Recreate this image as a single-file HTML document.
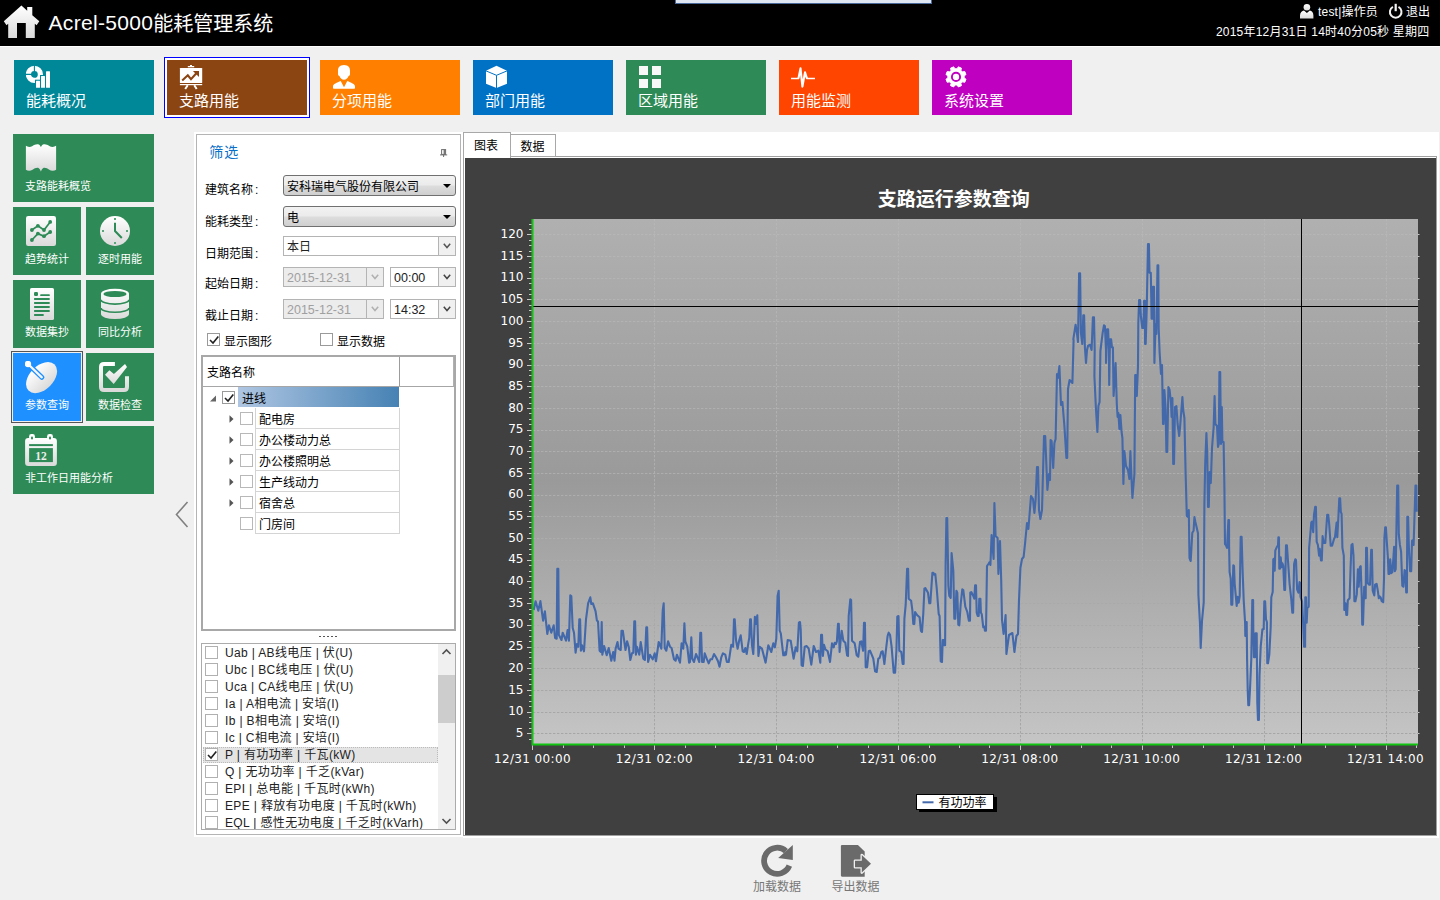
<!DOCTYPE html><html lang="zh"><head><meta charset="utf-8"><title>Acrel-5000能耗管理系统</title><style>
*{box-sizing:border-box;margin:0;padding:0}
html,body{width:1440px;height:900px;overflow:hidden;background:#f0f0f0}
body{position:relative;font-family:"Liberation Sans","Noto Sans CJK SC",sans-serif;font-size:12px;color:#000;line-height:1}
.a{position:absolute}
.t{position:absolute;white-space:nowrap}
#hdr{left:0;top:0;width:1440px;height:46px;background:#000}
#ttl{left:48.5px;top:9px;font-size:20px;line-height:30px;color:#fff}
#ttl .l{font-size:21px;letter-spacing:.32px;position:relative;top:-.6px}
.ht{color:#fff;font-size:12px;line-height:14px}
.mt{width:140px;height:55px;top:60px}
.mt .t{left:12px;top:31.5px;font-size:15px;line-height:18px;color:#fff}
.mt svg{position:absolute;left:12px;top:5px}
.lt{background:#2e8b57;width:68px;height:68px}
.lt.w{width:141px}
.lt .t{left:12px;top:45px;font-size:11px;line-height:14px;color:#fff}
.lt svg{position:absolute;left:12px;top:8px}
.lb{font-size:12px;line-height:14px}
.cmb{height:21px;border:1px solid #707070;border-radius:3px;background:linear-gradient(#f2f2f2 0,#ebebeb 48%,#dddddd 52%,#cfcfcf 100%);font-size:12px;line-height:20px;padding:1px 0 0 3px}
.cmb i{position:absolute;right:4px;top:8px;width:0;height:0;border:4px solid transparent;border-top:4.5px solid #000;border-bottom:0}
.fc{height:20px;border:1px solid #b4b4b4;background:#fff;font-size:12px;line-height:18px;padding:1px 0 0 3px;color:#222}
.fc.dis{background:#ececec;color:#a0a0a0}
.fc b{position:absolute;right:0;top:0;width:17px;height:18px;border-left:1px solid #b4b4b4;background:#f0f0f0}
.fc.dis b{background:#ececec}
.ck{width:13px;height:13px;border:1px solid #9a9a9a;background:#fff}
.tr{left:255px;width:145px;height:21px;border-left:1px solid #d4d4d4;border-right:1px solid #d4d4d4;border-bottom:1px solid #d4d4d4}
.li{left:225px;font-size:12px;line-height:14px;color:#222;letter-spacing:.35px}
</style></head><body>
<div class="a" id="hdr"></div><div class="a" style="left:0;top:46px;width:1440px;height:1px;background:#fff"></div>
<div class="a" style="left:675px;top:-1px;width:257px;height:4.5px;background:#dfe8f2;border:1px solid #48689a;border-top:0"></div>
<svg class="a" style="left:0;top:0" width="44" height="46" viewBox="0 0 44 46"><defs><linearGradient id="gh" x1="0" y1="0" x2="0" y2="1"><stop offset="0" stop-color="#ffffff"/><stop offset="1" stop-color="#dadada"/></linearGradient></defs><path d="M21.4 5.6 L27.2 10.7 V7 H32.3 V15.2 L39.3 21.3 L36.6 25.2 L34.8 23.8 V38.1 H25.8 V23 H17 V38.1 H8.2 V23.8 L6.5 25.2 L3.8 21.3 Z" fill="url(#gh)"/></svg>
<div class="t" id="ttl"><span class="l">Acrel-5000</span>能耗管理系统</div>
<svg class="a" style="left:1299px;top:3px" width="16" height="17" viewBox="0 0 16 17"><defs><linearGradient id="gu" x1="0" y1="0" x2="0" y2="1"><stop offset="0" stop-color="#ffffff"/><stop offset="1" stop-color="#dadada"/></linearGradient></defs><circle cx="7.9" cy="4.2" r="3.3" fill="url(#gu)"/><path d="M1 15.6 V12.5 C1 9.5 3 8 5 7.6 L7.9 10 L10.8 7.6 C12.8 8 14.4 9.5 14.4 12.5 V15.6 Z" fill="url(#gu)"/></svg>
<div class="t ht" style="left:1318px;top:5px;letter-spacing:.2px">test|操作员</div>
<svg class="a" style="left:1388px;top:3px" width="16" height="17" viewBox="0 0 16 17"><path d="M4.9 3.9 A5.8 5.8 0 1 0 10.5 3.9" fill="none" stroke="#f2f2f2" stroke-width="2"/><path d="M7.7 0.8 V8.2" stroke="#f2f2f2" stroke-width="2.2"/></svg>
<div class="t ht" style="left:1406px;top:5px">退出</div>
<div class="t ht" style="right:10.5px;top:25px;letter-spacing:.22px">2015年12月31日 14时40分05秒 星期四</div>
<div class="a mt" style="left:14px;background:#008899"><svg width="26" height="26" viewBox="0 0 26 26"><circle cx="8.4" cy="9.4" r="6" fill="none" stroke="#fff" stroke-width="5.2"/><path d="M8.4 0 V9.4 H0" fill="none" stroke="#008899" stroke-width="1.1"/><g fill="#008899"><rect x="9" y="14.7" width="6" height="9"/><rect x="14" y="10" width="6" height="14"/><rect x="19" y="5.2" width="6" height="19"/></g><g fill="#fff"><rect x="10" y="15.7" width="4" height="7.1" rx=".5"/><rect x="15" y="11" width="4" height="11.8" rx=".5"/><rect x="20" y="6.2" width="4" height="16.6" rx=".5"/></g></svg><div class="t">能耗概况</div></div>
<div class="a" style="left:164px;top:57px;width:146px;height:61px;border:1px solid #0000ff;background:#fff"></div>
<div class="a mt" style="left:167px;background:#8b4513"><svg width="26" height="26" viewBox="0 0 26 26"><rect x="11" y="0" width="2" height="1.4" fill="#fff"/><rect x="8.8" y="1" width="6.4" height="1.3" fill="#fff"/><rect x="0.9" y="3" width="22.3" height="15" rx=".6" fill="#fff"/><rect x="0.9" y="19" width="22.3" height="1.2" fill="#fff"/><path d="M8.7 20.2 L6.2 24 M15.3 20.2 L17.7 24" stroke="#fff" stroke-width="2"/><path d="M3.2 15.5 L8.8 10.3 L12 14.2 L17.6 8" fill="none" stroke="#8b4513" stroke-width="2.1"/><path d="M13.9 6 H20 V11.9 Z" fill="#8b4513"/></svg><div class="t">支路用能</div></div>
<div class="a mt" style="left:320px;background:#ff8000"><svg width="26" height="26" viewBox="0 0 26 26"><path d="M12 0 C16.5 0 18 2.8 18 5.5 V9 C18 10.4 17 10.8 16.4 11.2 C15.6 13.4 14 14.8 12 14.8 C10 14.8 8.4 13.4 7.6 11.2 C7 10.8 6 10.4 6 9 V5.5 C6 2.8 7.5 0 12 0 Z" fill="#fff"/><path d="M8.7 16 L12 22.3 L15.3 16 C19 17.5 23 19 23 21.5 V23 Q23 23.8 22.2 23.8 H1.8 Q1 23.8 1 23 V21.5 C1 19 5 17.5 8.7 16 Z" fill="#fff"/></svg><div class="t">分项用能</div></div>
<div class="a mt" style="left:473px;background:#0072c6"><svg width="26" height="26" viewBox="0 0 26 26"><path d="M11.5 0.8 L22 5.7 V18.8 L11.5 23 L1 18.8 V5.7 Z" fill="#fff"/><path d="M1 5.9 L11.5 10.3 L22 5.9 M11.5 10.3 V23" fill="none" stroke="#0072c6" stroke-width="1"/></svg><div class="t">部门用能</div></div>
<div class="a mt" style="left:626px;background:#2e8b57"><svg width="26" height="26" viewBox="0 0 26 26"><g fill="#f8f8f8"><rect x="1" y="1" width="9" height="9"/><rect x="14" y="1" width="9" height="9"/><rect x="1" y="14" width="9" height="9"/><rect x="14" y="14" width="9" height="9"/></g></svg><div class="t">区域用能</div></div>
<div class="a mt" style="left:779px;background:#ff4500"><svg width="26" height="26" viewBox="0 0 26 26"><path d="M0 13.5 H8 M15.4 13.5 H24" fill="none" stroke="#fff" stroke-width="1.3"/><path d="M7.4 13.6 L9.5 3.4 L11.4 21.6 L14 7.4 L16 13.6" fill="none" stroke="#fff" stroke-width="2.1" stroke-linejoin="round"/></svg><div class="t">用能监测</div></div>
<div class="a mt" style="left:932px;background:#c000c0"><svg width="26" height="26" viewBox="0 0 26 26"><path d="M20.12 13.06 L22.03 14.23 L20.74 17.35 L18.56 16.82 L16.92 18.46 L17.45 20.64 L14.33 21.93 L13.16 20.02 L10.84 20.02 L9.67 21.93 L6.55 20.64 L7.08 18.46 L5.44 16.82 L3.26 17.35 L1.97 14.23 L3.88 13.06 L3.88 10.74 L1.97 9.57 L3.26 6.45 L5.44 6.98 L7.08 5.34 L6.55 3.16 L9.67 1.87 L10.84 3.78 L13.16 3.78 L14.33 1.87 L17.45 3.16 L16.92 5.34 L18.56 6.98 L20.74 6.45 L22.03 9.57 L20.12 10.74 Z" fill="#fff" stroke="#fff" stroke-width="1" stroke-linejoin="round"/><circle cx="12" cy="11.9" r="4.1" fill="none" stroke="#c000c0" stroke-width="1.9"/></svg><div class="t">系统设置</div></div>
<div class="a lt w" style="left:13px;top:134px"><svg width="34" height="34" viewBox="0 0 34 34"><defs><linearGradient id="g1" x1="0" y1="0" x2="0" y2="1"><stop offset="0" stop-color="#ffffff"/><stop offset="1" stop-color="#dadada"/></linearGradient></defs><path d="M0.9 3.8 C2.5 5.2 5.5 5.2 7.5 4 C9.5 2.6 12 1.6 13.8 2.6 C15 3.3 15.5 4.5 15.9 5.1 C16.3 4.5 16.8 3.3 18 2.6 C19.8 1.6 22.3 2.6 24.3 4 C26.3 5.2 29.3 5.2 31.1 3.8 V27.7 C29.3 29 26.3 29 24.3 27.8 C22.3 26.4 19.8 25.2 18 26.2 C16.8 26.9 16.3 28.5 15.9 29.6 C15.5 28.5 15 26.9 13.8 26.2 C12 25.2 9.5 26.4 7.5 27.8 C5.5 29 2.5 29 0.9 27.7 Z" fill="url(#g1)"/></svg><div class="t">支路能耗概览</div></div>
<div class="a lt" style="left:13px;top:207px"><svg width="34" height="34" viewBox="0 0 34 34"><defs><linearGradient id="g2" x1="0" y1="0" x2="0" y2="1"><stop offset="0" stop-color="#ffffff"/><stop offset="1" stop-color="#dadada"/></linearGradient></defs><rect x="1" y="1" width="30" height="30" rx="2.2" fill="url(#g2)"/><g fill="none" stroke="#2e8b57" stroke-width="1.7"><path d="M6.9 15 L12.9 10.8 L19 15 L25.2 6.9"/><path d="M6.9 25 L12.9 18.6 L19 21.2 L25.2 17"/></g><g fill="#2e8b57"><circle cx="6.9" cy="15" r="1.9"/><circle cx="12.9" cy="10.8" r="1.9"/><circle cx="19" cy="15" r="1.9"/><circle cx="25.2" cy="6.9" r="1.9"/><circle cx="6.9" cy="25" r="1.9"/><circle cx="12.9" cy="18.6" r="1.9"/><circle cx="19" cy="21.2" r="1.9"/><circle cx="25.2" cy="17" r="1.9"/></g></svg><div class="t">趋势统计</div></div>
<div class="a lt" style="left:86px;top:207px"><svg width="34" height="34" viewBox="0 0 34 34"><defs><linearGradient id="g3" x1="0" y1="0" x2="0" y2="1"><stop offset="0" stop-color="#ffffff"/><stop offset="1" stop-color="#dadada"/></linearGradient></defs><circle cx="17" cy="16" r="15" fill="url(#g3)"/><path d="M17 7.7 V16 L23.8 23" fill="none" stroke="#2e8b57" stroke-width="2"/><g fill="#5aa67c"><rect x="16" y="3" width="2" height="2"/><rect x="16" y="27" width="2" height="2"/><rect x="4" y="15" width="2" height="2"/><rect x="28" y="15" width="2" height="2"/></g></svg><div class="t">逐时用能</div></div>
<div class="a lt" style="left:13px;top:280px"><svg width="34" height="34" viewBox="0 0 34 34"><defs><linearGradient id="g4" x1="0" y1="0" x2="0" y2="1"><stop offset="0" stop-color="#ffffff"/><stop offset="1" stop-color="#dadada"/></linearGradient></defs><rect x="5" y="0" width="24" height="32" rx="1.6" fill="url(#g4)"/><g fill="#2e8b57"><rect x="9" y="4.1" width="4" height="3.9" rx="1.2"/><rect x="15.2" y="6.3" width="9.6" height="1.7" rx=".6"/><rect x="9" y="10.1" width="15.8" height="1.8" rx=".6"/><rect x="9" y="14.1" width="15.8" height="1.8" rx=".6"/><rect x="9" y="18.1" width="15.8" height="1.8" rx=".6"/><rect x="9" y="22.1" width="15.8" height="1.8" rx=".6"/><rect x="9" y="26.1" width="9.8" height="1.8" rx=".6"/></g></svg><div class="t">数据集抄</div></div>
<div class="a lt" style="left:86px;top:280px"><svg width="34" height="34" viewBox="0 0 34 34"><defs><linearGradient id="g5" x1="0" y1="0" x2="0" y2="1"><stop offset="0" stop-color="#ffffff"/><stop offset="1" stop-color="#dadada"/></linearGradient></defs><path d="M3 5.7 A14 5 0 0 1 31 5.7 V26.1 A14 5 0 0 1 3 26.1 Z" fill="url(#g5)"/><ellipse cx="17" cy="6" rx="11.6" ry="3.1" fill="#2e8b57"/><path d="M3 11.7 A14 4.4 0 0 0 31 11.7 M3 19.9 A14 4.4 0 0 0 31 19.9" fill="none" stroke="#2e8b57" stroke-width="1.6"/></svg><div class="t">同比分析</div></div>
<div class="a" style="left:11px;top:351px;width:72px;height:72px;border:1px solid #555;background:#f0f0f0"></div>
<div class="a lt" style="left:13px;top:353px;background:#1e90ff"><svg width="34" height="34" viewBox="0 0 34 34"><defs><linearGradient id="g6" x1="0" y1="0" x2="0" y2="1"><stop offset="0" stop-color="#ffffff"/><stop offset="1" stop-color="#dadada"/></linearGradient></defs><ellipse cx="16.6" cy="16.6" rx="18.4" ry="11.9" transform="rotate(-45 16.6 16.6)" fill="url(#g6)"/><path d="M3 3 L16.8 16.3" stroke="#1e90ff" stroke-width="5" stroke-linecap="round"/><path d="M3 3 L16.8 16.3" stroke="#f6f6f6" stroke-width="2.3" stroke-linecap="round"/><circle cx="3" cy="3" r="3.2" fill="#fff"/></svg><div class="t">参数查询</div></div>
<div class="a lt" style="left:86px;top:353px"><svg width="34" height="34" viewBox="0 0 34 34"><defs><linearGradient id="g7" x1="0" y1="0" x2="0" y2="1"><stop offset="0" stop-color="#ffffff"/><stop offset="1" stop-color="#dadada"/></linearGradient></defs><path d="M16.9 3 H6 Q3 3 3 6 V26 Q3 29 6 29 H26 Q29 29 29 26 V15.2" fill="none" stroke="url(#g7)" stroke-width="4"/><path d="M7 13.7 L11.4 9.2 L15.9 13 L27 3 L29 6.1 L15.7 23 Z" fill="url(#g7)"/></svg><div class="t">数据检查</div></div>
<div class="a lt w" style="left:13px;top:426px"><svg width="34" height="34" viewBox="0 0 34 34"><defs><linearGradient id="g8" x1="0" y1="0" x2="0" y2="1"><stop offset="0" stop-color="#ffffff"/><stop offset="1" stop-color="#dadada"/></linearGradient></defs><rect x="0.1" y="3.9" width="31.8" height="28" rx="3.2" fill="url(#g8)"/><rect x="4.1" y="0" width="5.8" height="7" rx="2.2" fill="#fff"/><rect x="22.1" y="0" width="5.8" height="7" rx="2.2" fill="#fff"/><g fill="#2e8b57"><rect x="6" y="2.4" width="2" height="3.2" rx="1"/><rect x="24" y="2.4" width="2" height="3.2" rx="1"/><rect x="4.1" y="10.1" width="23.8" height="2"/><rect x="4.1" y="14.1" width="23.8" height="14"/></g><text x="16" y="25.7" text-anchor="middle" font-family="Liberation Serif,serif" font-weight="bold" font-size="11.5" fill="#eee">12</text></svg><div class="t">非工作日用能分析</div></div>
<svg class="a" style="left:174px;top:500px" width="16" height="30" viewBox="0 0 16 30"><path d="M13.5 2 L2.5 14.5 L13.5 27" fill="none" stroke="#808080" stroke-width="1.6"/></svg>
<div class="a" style="left:194px;top:132px;width:269px;height:705px;background:#fff"></div>
<div class="a" style="left:196px;top:134px;width:265px;height:701px;border:1px solid #b4b4b4"></div>
<div class="t" style="left:209.3px;top:144px;font-size:14px;line-height:16px;color:#0a6fc8;letter-spacing:1px">筛选</div>
<svg class="a" style="left:439px;top:148px" width="10" height="10" viewBox="0 0 10 10"><rect x="2.6" y="1.6" width="4" height="4.8" fill="#fff" stroke="#6e6e6e" stroke-width="1"/><rect x="4.6" y="1.6" width="2.4" height="4.8" fill="#777"/><path d="M1 6.9 H8.2 M4.6 7 V9" stroke="#6e6e6e" stroke-width="1"/></svg>
<div class="t lb" style="left:205px;top:183px">建筑名称<span style="margin-left:2px">:</span></div>
<div class="t lb" style="left:205px;top:215px">能耗类型<span style="margin-left:2px">:</span></div>
<div class="t lb" style="left:205px;top:246.5px">日期范围<span style="margin-left:2px">:</span></div>
<div class="t lb" style="left:205px;top:277px">起始日期<span style="margin-left:2px">:</span></div>
<div class="t lb" style="left:205px;top:308.5px">截止日期<span style="margin-left:2px">:</span></div>
<div class="a cmb" style="left:283px;top:175px;width:173px">安科瑞电气股份有限公司<i></i></div>
<div class="a cmb" style="left:283px;top:206px;width:173px">电<i></i></div>
<div class="a fc" style="left:283px;top:236px;width:173px">本日<b><svg class="a" style="left:3px;top:5px" width="10" height="8" viewBox="0 0 10 8"><path d="M1.8 1.8 L5 5.6 L8.2 1.8" fill="none" stroke="#555" stroke-width="1.5"/></svg></b></div>
<div class="a fc dis" style="left:283px;top:267px;width:101px;font-size:12.5px;line-height:19px">2015-12-31<b><svg class="a" style="left:3px;top:5px" width="10" height="8" viewBox="0 0 10 8"><path d="M1.8 1.8 L5 5.6 L8.2 1.8" fill="none" stroke="#b0b0b0" stroke-width="1.5"/></svg></b></div>
<div class="a fc" style="left:390px;top:267px;width:66px;font-size:12.5px;line-height:19px">00:00<b><svg class="a" style="left:3px;top:5px" width="10" height="8" viewBox="0 0 10 8"><path d="M1.8 1.8 L5 5.6 L8.2 1.8" fill="none" stroke="#444" stroke-width="1.5"/></svg></b></div>
<div class="a fc dis" style="left:283px;top:299px;width:101px;font-size:12.5px;line-height:19px">2015-12-31<b><svg class="a" style="left:3px;top:5px" width="10" height="8" viewBox="0 0 10 8"><path d="M1.8 1.8 L5 5.6 L8.2 1.8" fill="none" stroke="#b0b0b0" stroke-width="1.5"/></svg></b></div>
<div class="a fc" style="left:390px;top:299px;width:66px;font-size:12.5px;line-height:19px">14:32<b><svg class="a" style="left:3px;top:5px" width="10" height="8" viewBox="0 0 10 8"><path d="M1.8 1.8 L5 5.6 L8.2 1.8" fill="none" stroke="#444" stroke-width="1.5"/></svg></b></div>
<div class="a ck" style="left:207px;top:333px"><svg class="a" style="left:1px;top:1px" width="10" height="10" viewBox="0 0 10 10"><path d="M1 5 L4 8 L9.3 1.5" fill="none" stroke="#222" stroke-width="1.6"/></svg></div>
<div class="t lb" style="left:224px;top:335px">显示图形</div>
<div class="a ck" style="left:320px;top:333px"></div>
<div class="t lb" style="left:337px;top:335px">显示数据</div>
<div class="a" style="left:201px;top:355px;width:255px;height:276px;border:2px solid #a8a8a8;background:#fff"></div>
<div class="a" style="left:203px;top:357px;width:251px;height:30px;border-bottom:1px solid #a6a6a6;border-right:1px solid #b0b0b0"></div>
<div class="a" style="left:399px;top:357px;width:1px;height:29px;background:#9c9c9c"></div>
<div class="t lb" style="left:207px;top:366px">支路名称</div>
<div class="a" style="left:238px;top:387px;width:161px;height:20px;background:linear-gradient(90deg,#afc6e2,#4682b4)"></div>
<svg class="a" style="left:209px;top:395px" width="8" height="7" viewBox="0 0 8 7"><path d="M7 0.5 V6.5 H1 Z" fill="#666"/></svg>
<div class="a ck" style="left:222px;top:391px"><svg class="a" style="left:1px;top:1px" width="10" height="10" viewBox="0 0 10 10"><path d="M1 5 L4 8 L9.3 1.5" fill="none" stroke="#222" stroke-width="1.6"/></svg></div>
<div class="t lb" style="left:242px;top:392px">进线</div>
<div class="a tr" style="top:408px"></div>
<svg class="a" style="left:229px;top:415px" width="5" height="8" viewBox="0 0 5 8"><path d="M0.5 0.3 L4.5 4 L0.5 7.7 Z" fill="#555"/></svg>
<div class="a ck" style="left:240px;top:412px;border-color:#b8b8b8"></div>
<div class="t lb" style="left:259px;top:413px">配电房</div>
<div class="a tr" style="top:429px"></div>
<svg class="a" style="left:229px;top:436px" width="5" height="8" viewBox="0 0 5 8"><path d="M0.5 0.3 L4.5 4 L0.5 7.7 Z" fill="#555"/></svg>
<div class="a ck" style="left:240px;top:433px;border-color:#b8b8b8"></div>
<div class="t lb" style="left:259px;top:434px">办公楼动力总</div>
<div class="a tr" style="top:450px"></div>
<svg class="a" style="left:229px;top:457px" width="5" height="8" viewBox="0 0 5 8"><path d="M0.5 0.3 L4.5 4 L0.5 7.7 Z" fill="#555"/></svg>
<div class="a ck" style="left:240px;top:454px;border-color:#b8b8b8"></div>
<div class="t lb" style="left:259px;top:455px">办公楼照明总</div>
<div class="a tr" style="top:471px"></div>
<svg class="a" style="left:229px;top:478px" width="5" height="8" viewBox="0 0 5 8"><path d="M0.5 0.3 L4.5 4 L0.5 7.7 Z" fill="#555"/></svg>
<div class="a ck" style="left:240px;top:475px;border-color:#b8b8b8"></div>
<div class="t lb" style="left:259px;top:476px">生产线动力</div>
<div class="a tr" style="top:492px"></div>
<svg class="a" style="left:229px;top:499px" width="5" height="8" viewBox="0 0 5 8"><path d="M0.5 0.3 L4.5 4 L0.5 7.7 Z" fill="#555"/></svg>
<div class="a ck" style="left:240px;top:496px;border-color:#b8b8b8"></div>
<div class="t lb" style="left:259px;top:497px">宿舍总</div>
<div class="a tr" style="top:513px"></div>
<div class="a ck" style="left:240px;top:517px;border-color:#b8b8b8"></div>
<div class="t lb" style="left:259px;top:518px">门房间</div>
<div class="a" style="left:319px;top:635.5px;width:19px;height:1.6px;background:repeating-linear-gradient(90deg,#555 0 2px,transparent 2px 4px)"></div>
<div class="a" style="left:201px;top:643px;width:255px;height:187px;border:1px solid #ababab;background:#fff"></div>
<div class="a" style="left:438px;top:644px;width:17px;height:185px;background:#f0f0f0"></div>
<div class="a" style="left:438px;top:675px;width:17px;height:48px;background:#cdcdcd"></div>
<svg class="a" style="left:441px;top:648px" width="11" height="8" viewBox="0 0 11 8"><path d="M1.5 6 L5.5 2 L9.5 6" fill="none" stroke="#505050" stroke-width="1.6"/></svg>
<svg class="a" style="left:441px;top:817px" width="11" height="8" viewBox="0 0 11 8"><path d="M1.5 2 L5.5 6 L9.5 2" fill="none" stroke="#505050" stroke-width="1.6"/></svg>
<div class="a" style="left:203px;top:747px;width:235px;height:16px;background:#e4e4e4;border:1px dotted #bbb"></div>
<div class="a ck" style="left:205px;top:646px;border-color:#b0b0b0"></div>
<div class="t li" style="top:645.5px">Uab | AB线电压 | 伏(U)</div>
<div class="a ck" style="left:205px;top:663px;border-color:#b0b0b0"></div>
<div class="t li" style="top:662.5px">Ubc | BC线电压 | 伏(U)</div>
<div class="a ck" style="left:205px;top:680px;border-color:#b0b0b0"></div>
<div class="t li" style="top:679.5px">Uca | CA线电压 | 伏(U)</div>
<div class="a ck" style="left:205px;top:697px;border-color:#b0b0b0"></div>
<div class="t li" style="top:696.5px">Ia | A相电流 | 安培(I)</div>
<div class="a ck" style="left:205px;top:714px;border-color:#b0b0b0"></div>
<div class="t li" style="top:713.5px">Ib | B相电流 | 安培(I)</div>
<div class="a ck" style="left:205px;top:731px;border-color:#b0b0b0"></div>
<div class="t li" style="top:730.5px">Ic | C相电流 | 安培(I)</div>
<div class="a ck" style="left:205px;top:748px;border-color:#b0b0b0"><svg class="a" style="left:1px;top:1px" width="10" height="10" viewBox="0 0 10 10"><path d="M1 5 L4 8 L9.3 1.5" fill="none" stroke="#222" stroke-width="1.6"/></svg></div>
<div class="t li" style="top:747.5px">P | 有功功率 | 千瓦(kW)</div>
<div class="a ck" style="left:205px;top:765px;border-color:#b0b0b0"></div>
<div class="t li" style="top:764.5px">Q | 无功功率 | 千乏(kVar)</div>
<div class="a ck" style="left:205px;top:782px;border-color:#b0b0b0"></div>
<div class="t li" style="top:781.5px">EPI | 总电能 | 千瓦时(kWh)</div>
<div class="a ck" style="left:205px;top:799px;border-color:#b0b0b0"></div>
<div class="t li" style="top:798.5px">EPE | 释放有功电度 | 千瓦时(kWh)</div>
<div class="a ck" style="left:205px;top:816px;border-color:#b0b0b0"></div>
<div class="t li" style="top:815.5px">EQL | 感性无功电度 | 千乏时(kVarh)</div>
<div class="a" style="left:202px;top:829px;width:253px;height:1px;background:#ababab"></div>
<div class="a" style="left:197px;top:830px;width:263px;height:4px;background:#fff"></div>
<div class="a" style="left:463px;top:132px;width:976px;height:706px;background:#fff"></div>
<div class="a" style="left:463px;top:156px;width:974px;height:680px;border:1px solid #a0a0a0"></div>
<div class="a" style="left:510px;top:134px;width:46px;height:23px;border:1px solid #a8a8a8;background:#fff"></div>
<div class="a" style="left:463px;top:132px;width:48px;height:26px;border:1px solid #a8a8a8;border-bottom:0;background:#fff"></div>
<div class="t lb" style="left:474px;top:139px">图表</div>
<div class="t lb" style="left:520.5px;top:140px">数据</div>
<svg class="a" style="left:465px;top:158px" width="971" height="677" viewBox="465 158 971 677"><defs><linearGradient id="pg" x1="0" y1="0" x2="0" y2="1"><stop offset="0" stop-color="#b0b0b0"/><stop offset="0.5" stop-color="#9a9a9a"/><stop offset="1" stop-color="#c5c5c5"/></linearGradient><linearGradient id="vg" gradientUnits="userSpaceOnUse" x1="0" y1="219" x2="0" y2="744"><stop offset="0" stop-color="#b6b6b6"/><stop offset="1" stop-color="#a6a6a6"/></linearGradient><clipPath id="pc"><rect x="533" y="219" width="885" height="525"/></clipPath></defs><rect x="465" y="158" width="972" height="677" fill="#404040"/><rect x="533" y="219" width="885" height="525" fill="url(#pg)"/><path d="M533 733.5 H1418" fill="none" stroke="#a6a6a6" stroke-width="1" stroke-dasharray="2.4 1.6"/><path d="M533 712.5 H1418" fill="none" stroke="#a7a7a7" stroke-width="1" stroke-dasharray="2.4 1.6"/><path d="M533 690.5 H1418" fill="none" stroke="#a8a8a8" stroke-width="1" stroke-dasharray="2.4 1.6"/><path d="M533 668.5 H1418" fill="none" stroke="#a8a8a8" stroke-width="1" stroke-dasharray="2.4 1.6"/><path d="M533 647.5 H1418" fill="none" stroke="#a9a9a9" stroke-width="1" stroke-dasharray="2.4 1.6"/><path d="M533 625.5 H1418" fill="none" stroke="#aaaaaa" stroke-width="1" stroke-dasharray="2.4 1.6"/><path d="M533 603.5 H1418" fill="none" stroke="#aaaaaa" stroke-width="1" stroke-dasharray="2.4 1.6"/><path d="M533 581.5 H1418" fill="none" stroke="#ababab" stroke-width="1" stroke-dasharray="2.4 1.6"/><path d="M533 560.5 H1418" fill="none" stroke="#acacac" stroke-width="1" stroke-dasharray="2.4 1.6"/><path d="M533 538.5 H1418" fill="none" stroke="#acacac" stroke-width="1" stroke-dasharray="2.4 1.6"/><path d="M533 516.5 H1418" fill="none" stroke="#adadad" stroke-width="1" stroke-dasharray="2.4 1.6"/><path d="M533 495.5 H1418" fill="none" stroke="#aeaeae" stroke-width="1" stroke-dasharray="2.4 1.6"/><path d="M533 473.5 H1418" fill="none" stroke="#aeaeae" stroke-width="1" stroke-dasharray="2.4 1.6"/><path d="M533 451.5 H1418" fill="none" stroke="#afafaf" stroke-width="1" stroke-dasharray="2.4 1.6"/><path d="M533 430.5 H1418" fill="none" stroke="#b0b0b0" stroke-width="1" stroke-dasharray="2.4 1.6"/><path d="M533 408.5 H1418" fill="none" stroke="#b0b0b0" stroke-width="1" stroke-dasharray="2.4 1.6"/><path d="M533 386.5 H1418" fill="none" stroke="#b1b1b1" stroke-width="1" stroke-dasharray="2.4 1.6"/><path d="M533 365.5 H1418" fill="none" stroke="#b2b2b2" stroke-width="1" stroke-dasharray="2.4 1.6"/><path d="M533 343.5 H1418" fill="none" stroke="#b2b2b2" stroke-width="1" stroke-dasharray="2.4 1.6"/><path d="M533 321.5 H1418" fill="none" stroke="#b3b3b3" stroke-width="1" stroke-dasharray="2.4 1.6"/><path d="M533 299.5 H1418" fill="none" stroke="#b4b4b4" stroke-width="1" stroke-dasharray="2.4 1.6"/><path d="M533 278.5 H1418" fill="none" stroke="#b4b4b4" stroke-width="1" stroke-dasharray="2.4 1.6"/><path d="M533 256.5 H1418" fill="none" stroke="#b5b5b5" stroke-width="1" stroke-dasharray="2.4 1.6"/><path d="M533 234.5 H1418" fill="none" stroke="#b6b6b6" stroke-width="1" stroke-dasharray="2.4 1.6"/><path d="M654.5 219 V744 M776.5 219 V744 M898.5 219 V744 M1020.5 219 V744 M1142.5 219 V744 M1264.5 219 V744 M1386.5 219 V744" fill="none" stroke="url(#vg)" stroke-width="1" stroke-dasharray="2.4 1.6"/><polyline clip-path="url(#pc)" fill="none" stroke="#4369ab" stroke-width="2.1" stroke-linejoin="round" points="533.7,610.0 535.6,601.3 538.3,610.7 540.4,601.1 543.1,620.7 544.9,611.3 547.3,634.0 548.9,625.3 551.3,632.7 553.7,625.3 555.1,638.0 556.7,638.7 557.3,568.7 558.3,568.7 558.8,634.7 561.5,640.0 562.7,632.7 566.0,640.7 567.6,630.0 568.9,640.7 570.3,595.3 571.3,596.0 572.7,628.0 574.0,632.7 575.6,652.7 576.9,644.0 578.3,646.7 579.3,619.3 580.1,619.3 580.9,650.7 582.0,645.3 584.0,651.3 586.0,619.3 588.1,603.3 590.3,597.3 591.3,604.0 592.9,603.3 595.6,611.3 596.9,620.7 598.0,621.3 599.6,650.7 600.9,652.0 601.7,622.0 602.3,654.7 604.1,646.0 606.7,655.3 608.7,648.0 611.3,660.7 613.2,652.0 614.5,660.7 615.6,648.7 617.5,642.0 618.5,648.7 620.7,650.0 621.5,630.7 622.8,630.7 625.5,650.0 627.1,641.3 628.7,646.7 630.3,660.0 632.0,653.3 633.3,652.7 634.3,621.3 635.1,621.3 635.9,654.7 636.9,646.7 639.3,654.7 640.7,642.0 643.3,658.7 644.9,660.0 646.3,627.3 647.1,627.3 648.1,662.0 650.0,654.7 652.7,659.3 654.7,653.3 656.0,661.3 658.7,642.0 661.3,648.7 662.7,610.7 663.7,603.3 664.7,648.0 666.3,650.7 668.1,641.3 670.0,646.7 671.6,648.0 674.0,659.3 675.6,660.7 676.9,654.7 680.0,662.7 681.6,643.3 683.3,648.7 684.4,623.3 685.3,641.3 687.3,646.7 689.1,662.7 690.0,662.0 691.3,637.3 692.3,658.7 694.0,662.0 696.0,654.0 698.0,658.7 699.3,662.0 700.3,632.7 701.1,632.7 702.1,662.0 703.7,662.0 704.7,653.3 706.7,658.7 708.7,663.3 710.4,659.3 712.0,659.3 714.0,654.0 716.0,657.3 718.0,661.3 719.5,666.7 721.3,657.3 722.9,653.3 725.3,654.7 726.9,662.0 728.7,662.0 730.0,653.3 731.3,644.7 733.1,646.7 734.0,619.3 734.7,619.3 736.0,640.0 737.6,648.7 739.3,640.0 740.7,635.3 742.7,651.3 744.0,652.0 745.3,648.0 746.7,654.0 748.0,645.3 749.3,637.3 750.1,619.3 750.9,619.3 752.0,645.3 753.3,654.0 754.9,616.7 756.0,624.0 757.3,615.3 758.4,656.0 759.7,646.7 762.0,648.7 765.6,662.7 768.3,645.3 771.3,652.0 773.3,643.3 774.9,647.3 776.3,638.7 777.6,596.0 778.7,590.7 779.7,630.7 780.8,633.3 783.3,655.3 784.7,655.3 785.3,652.0 786.0,654.7 787.7,640.0 790.7,640.7 793.6,658.7 795.7,647.3 797.3,651.3 798.9,622.7 800.0,622.0 800.7,629.3 801.6,665.3 802.9,666.0 804.7,646.7 806.7,646.0 808.7,648.7 811.3,664.7 813.7,646.0 816.0,652.0 818.4,650.7 820.3,662.7 821.1,634.7 822.0,634.7 822.9,656.0 824.0,644.7 825.3,649.3 827.7,651.3 830.0,662.0 832.0,643.3 833.7,647.3 834.7,642.7 836.0,644.0 836.9,641.3 838.0,623.7 838.8,623.7 839.6,652.0 840.7,640.0 841.7,630.7 843.3,640.7 845.3,642.7 847.1,655.3 848.0,656.0 848.7,616.0 850.3,599.3 851.1,600.0 852.0,640.7 854.7,643.3 856.7,655.3 858.3,656.7 860.0,642.0 861.3,641.3 863.1,650.7 864.0,622.7 864.9,622.7 865.7,667.3 867.1,667.3 868.7,651.3 870.0,650.7 872.0,655.3 873.3,658.7 875.1,671.3 876.7,672.0 878.3,658.7 879.6,658.0 881.3,652.0 882.7,651.3 884.4,664.0 885.7,652.0 887.6,636.0 888.7,632.7 890.0,634.7 891.6,646.7 893.7,672.7 895.1,672.7 896.4,650.7 897.3,616.7 898.5,616.0 899.3,650.7 901.3,652.0 902.7,664.0 903.6,664.0 904.4,618.7 905.7,604.7 907.1,568.7 908.1,568.7 908.7,598.7 911.1,600.7 912.4,610.7 913.3,624.0 914.3,624.0 915.1,612.0 917.3,615.3 919.6,617.3 920.9,630.7 922.0,632.0 923.3,613.3 924.4,588.7 925.3,588.0 928.0,592.7 929.3,603.3 930.3,603.3 932.4,572.7 933.3,572.7 934.3,574.7 935.3,574.0 936.7,588.0 938.7,614.0 939.6,616.0 940.7,661.3 942.0,662.0 942.7,640.0 943.6,640.0 944.4,645.3 945.1,645.3 945.6,566.0 946.4,518.0 947.2,518.0 948.4,586.0 949.3,596.0 950.7,598.0 951.6,553.0 953.3,570.7 954.3,618.7 955.3,618.7 956.4,590.7 957.3,592.7 958.3,624.7 959.3,625.3 960.7,604.0 962.3,589.3 963.3,590.0 965.3,606.7 967.3,612.0 968.9,620.7 970.0,620.7 970.3,592.7 971.3,592.0 973.3,596.0 974.3,598.7 975.1,585.3 976.0,585.3 976.7,612.7 977.7,616.0 978.7,616.0 979.3,598.7 980.4,598.7 980.9,612.7 981.7,614.0 983.3,627.3 984.4,626.7 984.9,630.7 986.0,630.7 987.0,566.0 988.4,564.0 989.6,562.0 990.4,565.0 991.6,535.0 993.6,559.0 994.4,503.0 995.6,536.0 997.6,538.0 998.4,574.0 1000.0,541.0 1001.2,580.0 1002.0,620.0 1003.6,634.0 1005.6,615.0 1006.4,654.0 1009.0,635.0 1012.4,633.0 1014.4,652.0 1016.4,636.0 1018.0,634.0 1019.0,600.0 1020.4,568.0 1022.0,559.0 1023.6,557.0 1025.0,544.0 1027.0,523.0 1028.4,529.0 1029.6,514.0 1031.0,496.0 1033.0,499.0 1034.4,513.0 1035.6,500.0 1037.0,467.0 1038.0,467.0 1039.0,510.0 1040.4,519.0 1042.0,510.0 1044.0,436.0 1045.2,436.0 1047.4,490.0 1049.0,474.0 1050.0,480.0 1050.6,440.0 1051.6,441.0 1053.2,468.0 1054.4,443.0 1055.6,439.0 1057.0,374.0 1058.0,378.0 1059.4,366.0 1061.0,405.0 1062.4,402.0 1064.4,426.0 1066.4,458.0 1067.2,458.0 1068.0,389.0 1069.6,380.0 1072.4,383.0 1073.6,340.0 1073.3,339.3 1075.6,324.7 1076.7,331.3 1078.0,342.0 1079.1,273.3 1080.1,273.3 1080.9,332.7 1082.3,344.0 1083.3,315.3 1084.1,315.3 1084.9,347.3 1086.0,363.0 1087.0,350.0 1088.0,346.0 1090.0,344.7 1091.6,350.0 1092.9,317.3 1094.0,317.3 1094.7,350.0 1094.4,376.0 1096.0,410.0 1097.4,432.0 1098.4,406.0 1099.6,402.0 1100.4,351.0 1102.7,332.7 1104.0,325.3 1104.9,326.0 1106.0,350.0 1106.0,363.0 1107.1,329.3 1108.1,329.3 1108.9,350.0 1109.2,385.0 1110.0,339.3 1111.1,339.3 1112.0,347.3 1112.9,347.3 1113.6,396.0 1115.6,363.0 1116.8,404.0 1117.6,417.0 1118.4,413.0 1119.4,429.0 1120.4,415.0 1121.6,432.0 1122.4,438.0 1123.4,484.0 1124.4,451.0 1126.0,466.0 1128.0,470.0 1129.4,479.0 1130.4,451.0 1131.2,472.0 1132.4,498.0 1134.4,474.0 1135.2,375.0 1136.0,375.0 1136.8,396.0 1138.0,366.0 1138.3,323.3 1139.1,300.0 1140.1,300.0 1140.9,316.7 1142.3,328.0 1143.3,328.0 1144.1,300.7 1144.9,300.7 1145.1,344.0 1145.7,344.0 1146.7,310.0 1148.0,244.0 1148.9,244.0 1149.5,272.7 1150.8,272.7 1151.6,318.7 1152.4,318.7 1152.9,286.7 1154.0,286.7 1154.4,363.0 1155.6,324.0 1156.4,334.0 1157.5,265.3 1158.3,265.3 1158.7,328.7 1159.6,352.0 1161.0,374.0 1162.0,365.0 1163.0,424.0 1163.6,424.0 1164.4,390.0 1165.6,408.0 1166.4,452.0 1167.2,452.0 1168.4,387.0 1169.6,390.0 1171.0,403.0 1171.6,417.0 1172.4,398.0 1173.2,464.0 1174.0,464.0 1175.0,407.0 1176.4,406.0 1177.6,424.0 1179.2,436.0 1180.0,428.0 1182.4,397.0 1183.2,410.0 1184.4,418.0 1185.6,472.0 1186.8,516.0 1188.0,517.0 1188.8,510.0 1189.5,558.0 1190.7,561.0 1192.3,532.7 1193.6,530.7 1194.4,517.0 1195.4,522.0 1198.0,533.3 1198.4,594.7 1200.0,624.0 1200.7,648.0 1202.0,621.0 1203.7,602.7 1204.4,504.0 1205.2,464.0 1206.4,433.0 1207.2,452.0 1208.0,507.0 1208.8,507.0 1209.6,472.0 1210.8,483.0 1212.0,448.0 1213.6,428.0 1214.6,396.0 1215.4,424.0 1217.0,426.0 1218.0,447.0 1218.8,444.0 1219.4,372.0 1220.2,372.0 1221.0,444.0 1221.8,407.0 1222.4,442.0 1223.6,442.0 1224.4,488.0 1225.0,544.0 1226.0,545.3 1227.0,548.0 1228.4,520.0 1229.0,520.0 1229.1,546.7 1229.6,572.0 1230.7,578.7 1231.3,604.7 1232.3,604.7 1233.3,565.3 1234.0,566.0 1234.7,584.0 1236.7,606.0 1237.6,596.7 1238.7,602.7 1239.7,596.0 1240.7,536.7 1241.6,536.7 1242.7,573.3 1243.7,600.0 1245.1,622.7 1245.3,636.0 1246.7,622.0 1247.1,660.0 1247.7,689.3 1248.3,705.3 1249.1,705.3 1250.0,689.3 1251.3,658.7 1252.3,600.0 1253.1,600.0 1253.3,629.3 1254.0,657.3 1254.9,657.3 1255.5,633.3 1256.7,633.3 1257.3,702.7 1258.0,720.0 1258.9,720.0 1259.5,676.0 1260.7,646.7 1262.4,629.3 1263.7,629.3 1264.3,601.3 1265.1,601.3 1266.0,619.3 1266.9,622.0 1267.3,663.3 1268.0,663.3 1269.3,654.7 1270.7,626.7 1271.3,597.3 1272.7,592.0 1273.3,559.3 1274.0,558.7 1274.7,570.7 1275.3,550.7 1276.7,547.3 1278.0,545.3 1278.4,537.3 1278.9,537.3 1279.3,568.7 1280.0,568.7 1280.7,557.3 1281.6,567.3 1282.4,563.3 1283.3,566.0 1284.3,590.0 1285.1,590.0 1286.0,545.3 1286.9,545.3 1288.3,565.3 1289.6,584.0 1291.3,599.3 1292.3,612.7 1293.1,612.7 1294.1,564.0 1295.3,559.3 1296.0,560.0 1297.1,589.3 1298.4,592.7 1299.5,582.0 1300.0,582.7 1300.5,596.7 1302.0,601.3 1302.9,617.3 1304.0,646.7 1305.1,646.7 1305.3,597.3 1306.0,597.3 1306.7,622.7 1307.3,608.0 1308.7,606.7 1309.1,548.0 1311.3,522.5 1312.1,521.5 1313.2,532.2 1314.0,514.7 1315.2,506.9 1315.9,506.9 1316.7,541.9 1317.9,544.9 1319.1,555.6 1319.8,548.8 1321.0,560.4 1321.8,560.4 1322.6,536.1 1323.7,542.9 1325.3,542.9 1327.2,514.7 1328.2,514.7 1329.2,524.4 1330.7,545.8 1332.1,545.8 1334.0,539.0 1335.0,537.1 1336.6,522.5 1337.3,537.1 1338.5,514.7 1339.3,498.2 1340.1,498.2 1340.8,511.8 1341.6,513.8 1342.4,547.8 1343.8,555.6 1344.3,610.0 1345.5,603.2 1346.3,614.9 1347.1,614.9 1347.8,600.3 1349.6,598.3 1350.6,567.2 1351.5,544.9 1352.5,543.9 1353.5,555.6 1354.4,601.2 1355.4,601.2 1356.8,594.4 1357.9,569.2 1358.7,586.7 1359.9,567.2 1360.7,566.2 1361.8,598.3 1362.2,624.6 1363.0,624.6 1364.2,586.7 1364.9,598.3 1365.7,598.3 1366.1,547.8 1366.9,547.8 1367.7,582.8 1369.0,584.7 1370.0,584.7 1371.2,549.7 1371.9,549.7 1372.7,590.6 1374.3,595.4 1375.1,584.7 1376.6,583.8 1377.8,590.6 1378.8,598.3 1379.7,596.4 1380.7,597.4 1381.7,601.2 1383.2,602.2 1384.0,578.9 1384.4,538.1 1385.2,527.4 1385.9,527.4 1386.7,540.0 1387.9,557.5 1388.5,574.0 1389.4,574.0 1390.2,559.4 1391.4,573.1 1392.4,572.1 1393.3,559.4 1394.1,546.8 1394.9,571.1 1395.7,569.2 1396.4,530.3 1397.2,485.6 1398.2,485.6 1398.8,534.2 1399.9,544.9 1401.1,551.7 1402.3,585.7 1403.4,586.7 1404.6,570.1 1405.4,571.1 1406.2,592.5 1406.9,592.5 1407.3,516.7 1408.1,516.7 1408.9,547.8 1410.1,571.1 1411.2,571.1 1412.0,541.0 1412.8,540.0 1413.6,544.9 1414.3,522.5 1415.5,485.6 1416.3,485.6 1416.7,511.8"/><path d="M533 306.5 H1418 M1301.5 219 V744" stroke="#000" stroke-width="1" fill="none"/><path d="M532.5 219 V745.5 M531.5 744.5 H1418" stroke="#12c412" stroke-width="2" fill="none"/><path d="M529 739.5 H531.5 M527 733.5 H531.5 M529 728.5 H531.5 M529 722.5 H531.5 M529 717.5 H531.5 M527 712.5 H531.5 M529 706.5 H531.5 M529 701.5 H531.5 M529 695.5 H531.5 M527 690.5 H531.5 M529 684.5 H531.5 M529 679.5 H531.5 M529 674.5 H531.5 M527 668.5 H531.5 M529 663.5 H531.5 M529 657.5 H531.5 M529 652.5 H531.5 M527 647.5 H531.5 M529 641.5 H531.5 M529 636.5 H531.5 M529 630.5 H531.5 M527 625.5 H531.5 M529 619.5 H531.5 M529 614.5 H531.5 M529 609.5 H531.5 M527 603.5 H531.5 M529 598.5 H531.5 M529 592.5 H531.5 M529 587.5 H531.5 M527 581.5 H531.5 M529 576.5 H531.5 M529 571.5 H531.5 M529 565.5 H531.5 M527 560.5 H531.5 M529 554.5 H531.5 M529 549.5 H531.5 M529 544.5 H531.5 M527 538.5 H531.5 M529 533.5 H531.5 M529 527.5 H531.5 M529 522.5 H531.5 M527 516.5 H531.5 M529 511.5 H531.5 M529 506.5 H531.5 M529 500.5 H531.5 M527 495.5 H531.5 M529 489.5 H531.5 M529 484.5 H531.5 M529 478.5 H531.5 M527 473.5 H531.5 M529 468.5 H531.5 M529 462.5 H531.5 M529 457.5 H531.5 M527 451.5 H531.5 M529 446.5 H531.5 M529 440.5 H531.5 M529 435.5 H531.5 M527 430.5 H531.5 M529 424.5 H531.5 M529 419.5 H531.5 M529 413.5 H531.5 M527 408.5 H531.5 M529 403.5 H531.5 M529 397.5 H531.5 M529 392.5 H531.5 M527 386.5 H531.5 M529 381.5 H531.5 M529 375.5 H531.5 M529 370.5 H531.5 M527 365.5 H531.5 M529 359.5 H531.5 M529 354.5 H531.5 M529 348.5 H531.5 M527 343.5 H531.5 M529 337.5 H531.5 M529 332.5 H531.5 M529 327.5 H531.5 M527 321.5 H531.5 M529 316.5 H531.5 M529 310.5 H531.5 M529 305.5 H531.5 M527 299.5 H531.5 M529 294.5 H531.5 M529 289.5 H531.5 M529 283.5 H531.5 M527 278.5 H531.5 M529 272.5 H531.5 M529 267.5 H531.5 M529 262.5 H531.5 M527 256.5 H531.5 M529 251.5 H531.5 M529 245.5 H531.5 M529 240.5 H531.5 M527 234.5 H531.5 M529 229.5 H531.5 M529 224.5 H531.5 M532.5 745.5 V750 M563.5 745.5 V748 M593.5 745.5 V748 M624.5 745.5 V748 M654.5 745.5 V750 M685.5 745.5 V748 M715.5 745.5 V748 M746.5 745.5 V748 M776.5 745.5 V750 M807.5 745.5 V748 M837.5 745.5 V748 M868.5 745.5 V748 M898.5 745.5 V750 M929.5 745.5 V748 M959.5 745.5 V748 M989.5 745.5 V748 M1020.5 745.5 V750 M1050.5 745.5 V748 M1081.5 745.5 V748 M1111.5 745.5 V748 M1142.5 745.5 V750 M1172.5 745.5 V748 M1203.5 745.5 V748 M1233.5 745.5 V748 M1264.5 745.5 V750 M1294.5 745.5 V748 M1325.5 745.5 V748 M1355.5 745.5 V748 M1386.5 745.5 V750 M1416.5 745.5 V748 M1418 733.5 H1419.5 M1418 712.5 H1419.5 M1418 690.5 H1419.5 M1418 668.5 H1419.5 M1418 647.5 H1419.5 M1418 625.5 H1419.5 M1418 603.5 H1419.5 M1418 581.5 H1419.5 M1418 560.5 H1419.5 M1418 538.5 H1419.5 M1418 516.5 H1419.5 M1418 495.5 H1419.5 M1418 473.5 H1419.5 M1418 451.5 H1419.5 M1418 430.5 H1419.5 M1418 408.5 H1419.5 M1418 386.5 H1419.5 M1418 365.5 H1419.5 M1418 343.5 H1419.5 M1418 321.5 H1419.5 M1418 299.5 H1419.5 M1418 278.5 H1419.5 M1418 256.5 H1419.5 M1418 234.5 H1419.5" stroke="#c8c8c8" stroke-width="1" fill="none"/><g font-family="DejaVu Sans,Liberation Sans,sans-serif" font-size="12" fill="#fff"><text x="523.5" y="736.9" text-anchor="end">5</text><text x="523.5" y="715.2" text-anchor="end">10</text><text x="523.5" y="693.5" text-anchor="end">15</text><text x="523.5" y="671.8" text-anchor="end">20</text><text x="523.5" y="650.1" text-anchor="end">25</text><text x="523.5" y="628.4" text-anchor="end">30</text><text x="523.5" y="606.8" text-anchor="end">35</text><text x="523.5" y="585.1" text-anchor="end">40</text><text x="523.5" y="563.4" text-anchor="end">45</text><text x="523.5" y="541.7" text-anchor="end">50</text><text x="523.5" y="520.0" text-anchor="end">55</text><text x="523.5" y="498.3" text-anchor="end">60</text><text x="523.5" y="476.6" text-anchor="end">65</text><text x="523.5" y="454.9" text-anchor="end">70</text><text x="523.5" y="433.2" text-anchor="end">75</text><text x="523.5" y="411.5" text-anchor="end">80</text><text x="523.5" y="389.9" text-anchor="end">85</text><text x="523.5" y="368.2" text-anchor="end">90</text><text x="523.5" y="346.5" text-anchor="end">95</text><text x="523.5" y="324.8" text-anchor="end">100</text><text x="523.5" y="303.1" text-anchor="end">105</text><text x="523.5" y="281.4" text-anchor="end">110</text><text x="523.5" y="259.7" text-anchor="end">115</text><text x="523.5" y="238.0" text-anchor="end">120</text><text x="532.5" y="763.1" text-anchor="middle" letter-spacing=".38">12/31 00:00</text><text x="654.4" y="763.1" text-anchor="middle" letter-spacing=".38">12/31 02:00</text><text x="776.2" y="763.1" text-anchor="middle" letter-spacing=".38">12/31 04:00</text><text x="898.1" y="763.1" text-anchor="middle" letter-spacing=".38">12/31 06:00</text><text x="1019.9" y="763.1" text-anchor="middle" letter-spacing=".38">12/31 08:00</text><text x="1141.8" y="763.1" text-anchor="middle" letter-spacing=".38">12/31 10:00</text><text x="1263.7" y="763.1" text-anchor="middle" letter-spacing=".38">12/31 12:00</text><text x="1385.5" y="763.1" text-anchor="middle" letter-spacing=".38">12/31 14:00</text></g><text x="953.7" y="206.2" text-anchor="middle" font-family="Liberation Sans,Noto Sans CJK SC,sans-serif" font-weight="bold" font-size="19" fill="#fff">支路运行参数查询</text><rect x="919" y="797" width="78" height="15" fill="#000"/><rect x="916.5" y="794.5" width="77" height="15" fill="#fff" stroke="#000" stroke-width="1"/><path d="M922.5 802.3 H933.5" stroke="#4369ab" stroke-width="2"/><text x="938.5" y="807.1" font-family="Liberation Sans,Noto Sans CJK SC,sans-serif" font-size="12" fill="#000">有功功率</text></svg>
<svg class="a" style="left:760px;top:843px" width="36" height="36" viewBox="0 0 36 36"><path d="M25.97 8.06 A13.1 13.1 0 1 0 29.35 22.71" fill="none" stroke="#6a6a6a" stroke-width="5.8"/><path d="M32.8 2 V16.9 L18.2 14.9 Z" fill="#6a6a6a"/></svg>
<svg class="a" style="left:840px;top:844px" width="33" height="34" viewBox="0 0 33 34"><path d="M2 1 H17.9 L24.7 7.6 V32.7 H2 Q0.9 32.7 0.9 31.6 V2.1 Q0.9 1 2 1 Z" fill="#6a6a6a"/><path d="M15 16.8 H21.8 V11 L31 19.8 L21.8 28.5 V23.2 H15 Z" fill="#6a6a6a" stroke="#f0f0f0" stroke-width="2.6" stroke-linejoin="round" paint-order="stroke"/></svg>
<div class="t lb" style="left:753px;top:880.4px;color:#777">加载数据</div>
<div class="t lb" style="left:831.5px;top:880.4px;color:#777">导出数据</div>
</body></html>
